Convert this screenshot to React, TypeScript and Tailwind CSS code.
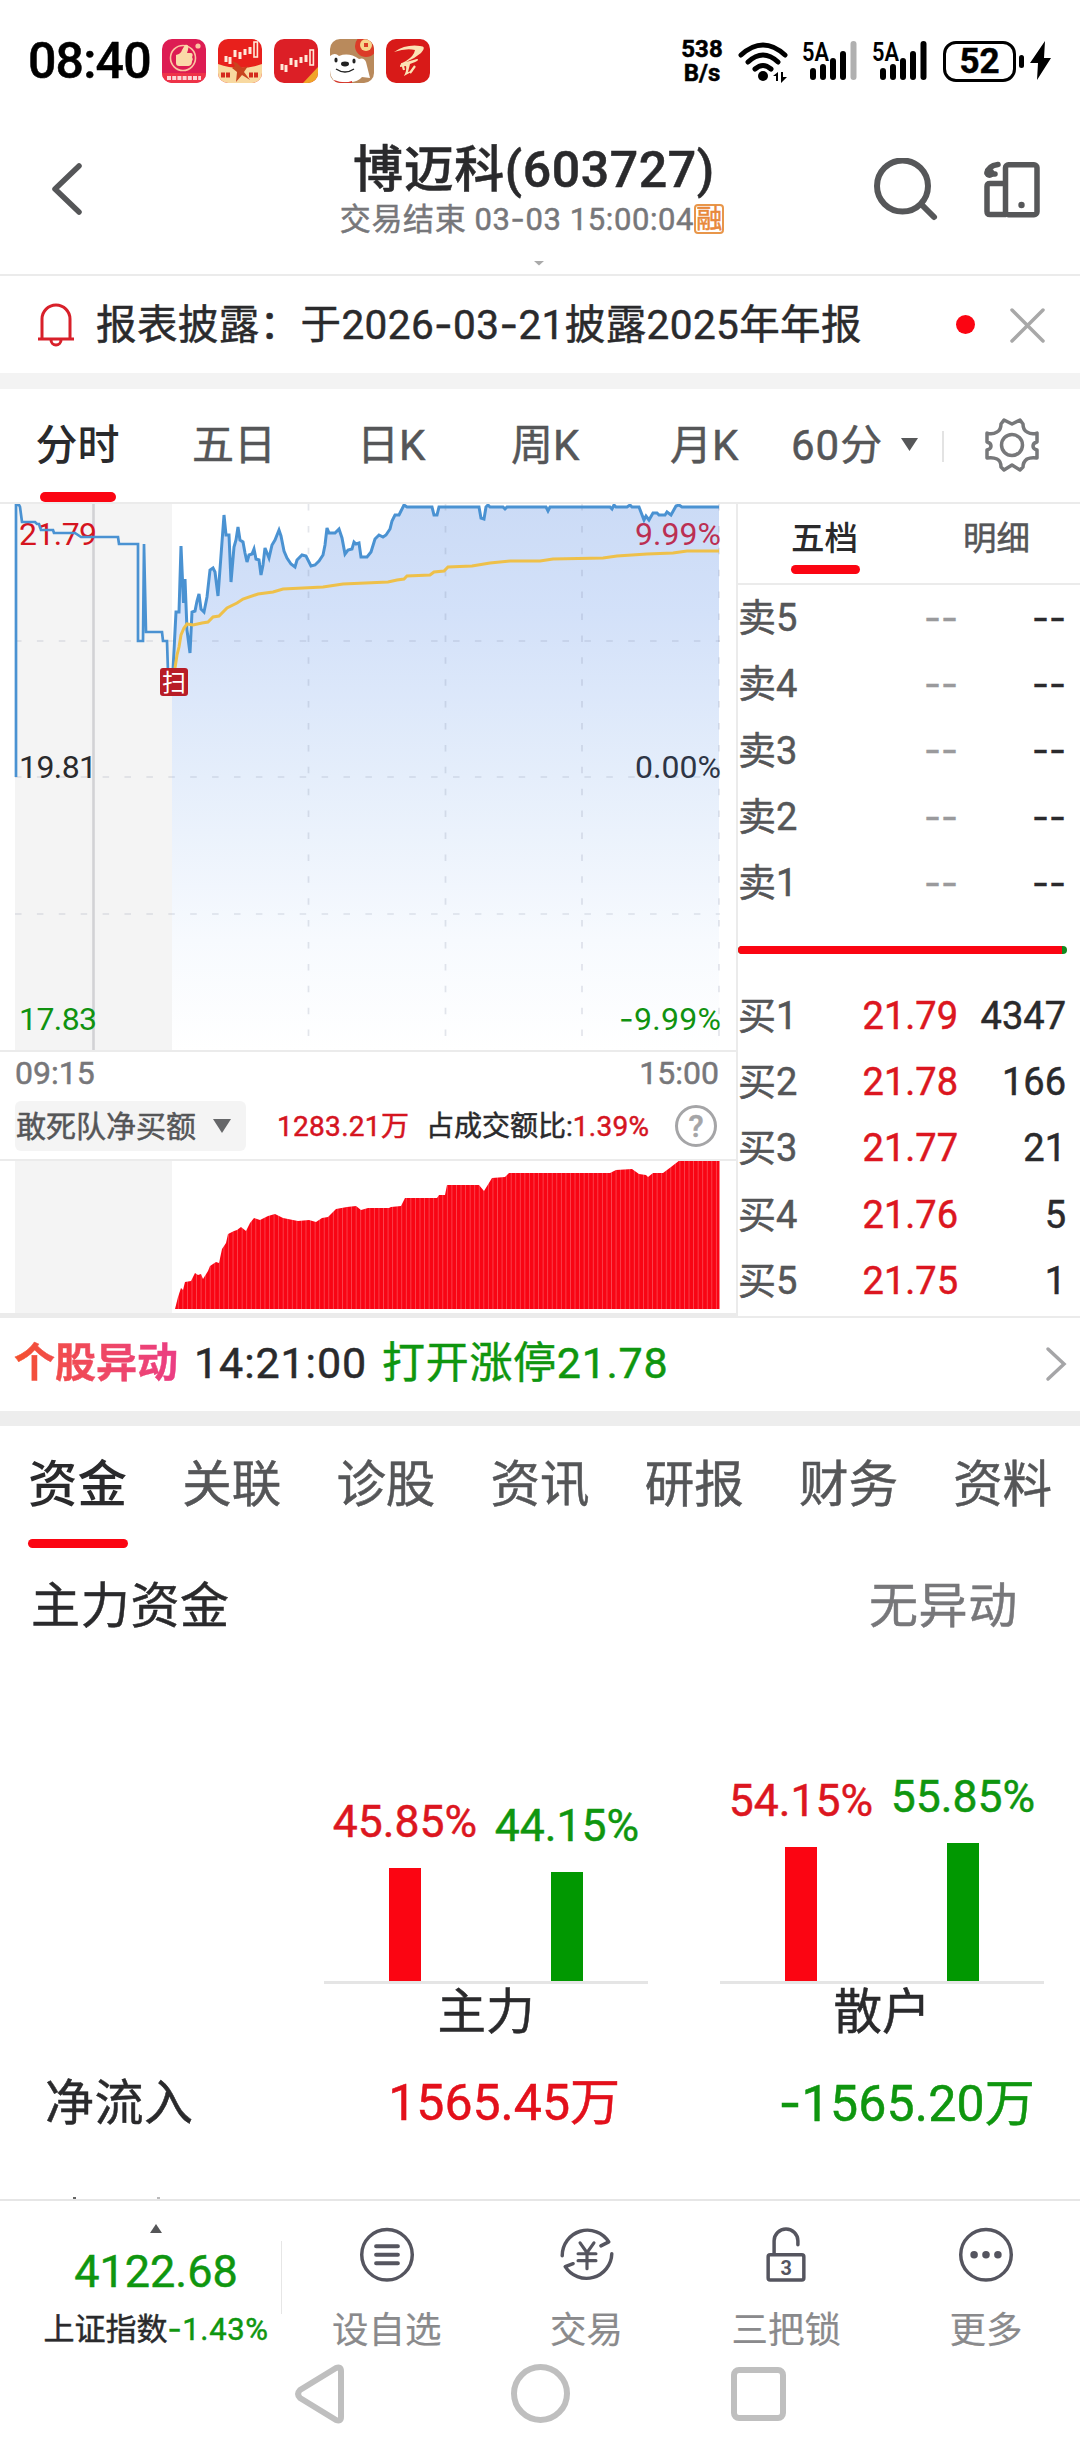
import { ReactNode } from "react";

interface Level {
  name: string;
  price: string;
  volume: string;
}

const periods = [
  { label: "五日", cls: "ml-[72px] w-[84px]" },
  { label: "日K", cls: "ml-[81px] w-[70px]" },
  { label: "周K", cls: "ml-[84px] w-[74px]" },
  { label: "月K", cls: "ml-[85px] w-[74px]" },
];

const sells: Level[] = [5, 4, 3, 2, 1].map((n) => ({ name: `卖${n}`, price: "--", volume: "--" }));

const buys: Level[] = [
  { name: "买1", price: "21.79", volume: "4347" },
  { name: "买2", price: "21.78", volume: "166" },
  { name: "买3", price: "21.77", volume: "21" },
  { name: "买4", price: "21.76", volume: "5" },
  { name: "买5", price: "21.75", volume: "1" },
];

const infoTabs = ["资金", "关联", "诊股", "资讯", "研报", "财务", "资料"];

const preMarket =
  "16,777 16,505 19,505 20,507 22,522 35,522 37,524 39,524 41,530 53,530 54,533 75,533 81,537 118,537 119,544 138,544 138,641 143,641 144,544 146,632 162,632 163,641 167,641 168,672";

const priceLine =
  "173,670 176,612 179,612 181,546 183.5,603 185,579 187,630 190,653 192,612 195,611 197,601 199,594 201,609 204,612 207,597 210,570 213,568 215,572 218,596 224,515 226,535 229,535 231,582 234,547 236,540 238,527 240,540 243,542 245,553 247,562 249,555 252,554 254,549 256,559 259,560 261,575 263,565 265,548 269,558 272,545 275,540 279,530 281,536 284,551 287,558 291,564 295,567 297,560 302,555 306,556 311,566 315,565 319,561 323,555 325,545 327,528 329,533 335,533 339,529 342,538 345,554 348,550 352,549 354,542 356,544 359,543 361,557 367,557 371,552 375,539 379,535 383,537 386,535 390,529 392,521 395,515 399,515 401,511 404,505 407,507 432,507 434,515 437,515 439,507 479,507 481,518 484,519 486,507 488,505 490,507 503,507 505,509 507,507 546,507 548,511 550,507 610,507 612,509 614,505 616,507 627,507 630,505 632,507 639,507 644,520 646,516 649,520 653,513 657,513 659,515 665,515 667,512 671,515 676,506 679,505 682,507 719,507";

const avgLine =
  "175,668 177,655 179,647 181,635 184,628 187,624 193,625 202,623 208,622 213,617 219,616 227,608 237,603 243,599 258,594 273,592 283,589 323,587 343,584 388,582 397,580 404,579 407,576 430,575 434,572 444,571 448,567 472,566 490,563 510,561 540,561 553,559 603,558 617,556 647,554 673,553 687,551 719,551";

const netBuy =
  "175,1309 178,1297 181,1288 183,1290 185,1282 191,1281 195,1273 198,1275 201,1274 203,1279 208,1271 210,1266 216,1262 219,1263 222,1249 226,1243 228,1234 234,1231 237,1230 241,1227 246,1231 250,1223 254,1218 260,1220 268,1216 275,1214 283,1218 298,1221 309,1220 316,1222 322,1218 328,1217 336,1209 347,1207 356,1206 361,1210 368,1208 389,1208 391,1207 401,1206 405,1198 437,1198 439,1195 445,1195 447,1185 479,1185 484,1191 492,1178 505,1177 509,1173 610,1173 616,1170 632,1169 639,1174 646,1175 648,1177 653,1173 663,1173 671,1167 680,1160 719.5,1160";

function Candles() {
  return (
    <g stroke="#ffe9d8" strokeWidth="1.6" fill="#ffe9d8">
      <path d="M8 25v6M12 26v7M17 19v7M22 21v7M27 18v6M32 16v7" strokeWidth="3" />
      <rect x="36" y="11" width="3.4" height="15" fill="none" />
    </g>
  );
}

function AppIcons() {
  return (
    <div className="flex gap-3">
      <svg className="h-11 w-11 rounded-[10px] bg-[#dd1c53]" viewBox="0 0 44 44">
        <rect y="34" width="44" height="10" fill="#ee3348" />
        <circle cx="21" cy="19" r="12.5" fill="none" stroke="#fbc4a0" strokeWidth="1.6" />
        <path d="M14 16q5-1 6-5l3-5c3-1 4 1 3 5l-1 3h4c2 0 2 3 1 4 1 2 1 3 0 4 0 3-1 5-5 5h-8q-3 0-3-3z" fill="#fbd9a8" />
        <circle cx="36" cy="7" r="2.6" fill="#fbc4a0" />
        <path d="M5 39h34" stroke="#fcd6d6" strokeWidth="4" strokeDasharray="4 1.2" />
      </svg>
      <svg className="h-11 w-11 rounded-[10px] bg-[#e8201c]" viewBox="0 0 44 44">
        <path d="M0 25q22 8 44 0v19H0z" fill="#f8d9a0" />
        <g transform="translate(0 -8)"><Candles /></g>
        <path d="M14 22l5 2 5 5 6-2-4 6 6 8-8-5-6 7 1-10-5-4 3-2z" fill="#c8441f" />
        <path d="M3 36h9M31 36h10" stroke="#d42a1d" strokeWidth="5" strokeDasharray="4 1" />
      </svg>
      <svg className="h-11 w-11 rounded-[10px] bg-[#dc1f26]" viewBox="0 0 44 44">
        <Candles />
        <path d="M44 28L29 44h15z" fill="#f0a428" />
      </svg>
      <svg className="h-11 w-11 rounded-[10px] bg-[#b98a5c]" viewBox="0 0 44 44">
        <circle cx="36" cy="7" r="11" fill="#dc3b28" />
        <circle cx="36" cy="6" r="6" fill="#f6d58c" />
        <path d="M34 4h4v4h-4z" fill="#dc3b28" />
        <path d="M0 17q5-4 9 0 10-4 20 3 5-2 7 3l4 16-8-1q-4 5-12 5H6q-6-4-6-12z" fill="#fff" />
        <ellipse cx="15" cy="25" rx="4" ry="2.400" fill="#222" />
        <ellipse cx="6" cy="21" rx="1.6" ry="2.6" fill="#222" />
        <ellipse cx="24" cy="22" rx="1.6" ry="2.6" fill="#222" />
        <path d="M6 30q9 6 18 0" fill="none" stroke="#222" strokeWidth="1.4" />
        <path d="M4 41q10 4 18 1v2H5z" fill="#d8342b" />
      </svg>
      <svg className="h-11 w-11 rounded-[10px] bg-[#d81a18]" viewBox="0 0 44 44">
        <path d="M8 13Q20 5 34 7q7 0 1 7-7 6-15 9l11-3q4 1-7 5l-2 8 5-1-9 5q3-6 2-10l-6 1q-1-3 6-6 8-5 9-11Q20 9 8 13z" fill="#fbe3b4" />
        <path d="M16 24l2 7M29 27l-5 7" stroke="#fbe3b4" strokeWidth="2.2" />
      </svg>
    </div>
  );
}

function Signal({ weak }: { weak?: boolean }) {
  return (
    <svg className="h-[44px] w-[56px]" viewBox="0 0 56 44">
      <text x="0" y="22" fontSize="25" fontWeight="600" fontFamily="Roboto" textLength="27" lengthAdjust="spacingAndGlyphs">5A</text>
      <g strokeWidth="6" strokeLinecap="round" stroke="#000">
        <path d="M11 32v6M21 28v10M31 22v16M41 15v23" />
        <path d="M51.500 5v33" stroke={weak ? "#b0b0b0" : "#000"} />
      </g>
    </svg>
  );
}

function StatusBar() {
  return (
    <div className="flex h-[122px] items-center pl-[28px] text-black">
      <div className="w-[134px] text-[50px] font-medium tracking-[-0.800px]">08:40</div>
      <AppIcons />
      <div className="ml-[249px] w-[46px] text-center text-[24px] leading-[24px] font-bold">
        <div>538</div>
        <div>B/s</div>
      </div>
      <svg className="ml-[13px] h-[44px] w-[52px]" viewBox="0 0 52 44" fill="none" stroke="#000" strokeWidth="5" strokeLinecap="round">
        <path d="M3 16Q25-4 47 16M10 23Q25 9 40 23M17 30q8-7 16 0" />
        <circle cx="25" cy="37" r="5" fill="#000" stroke="none" />
        <path d="M35 37l5-4v9h-2v-5zM43 33h2v5h4l-6 6z" fill="#000" stroke="none" />
      </svg>
      <div className="ml-[12px] flex gap-[14px]">
        <Signal weak />
        <Signal />
      </div>
      <div className="ml-[15px] flex h-[41px] w-[73px] items-center justify-center rounded-[13px] border-[3px] border-black text-[35px] font-bold">52</div>
      <div className="ml-[3px] h-[13px] w-[5px] rounded-full bg-black" />
      <svg className="ml-[6px] h-[40px] w-[22px]" viewBox="0 0 22 40">
        <path d="M15 0L0 22h8L7 39l14-22h-7z" />
      </svg>
    </div>
  );
}

function Header() {
  return (
    <div className="flex h-[152px]">
      <svg className="mt-[40px] ml-[48px] h-[54px] w-[36px] shrink-0" viewBox="0 0 36 54" fill="none" stroke="#555658" strokeWidth="5.500" strokeLinecap="round" strokeLinejoin="round">
        <path d="M31 4L7 27l24 23" />
      </svg>
      <div className="ml-[204px] flex w-[502px] shrink-0 flex-col items-center">
        <div className="mt-[23px] -ml-[10px] text-[50px] font-medium tracking-[0.600px] whitespace-nowrap text-[#2a2a2c]">博迈科(603727)</div>
        <div className="mt-[8px] -ml-[14px] flex items-center whitespace-nowrap text-[31px] text-[#77777a]">
          <span className="tracking-[0.600px]">交易结束 03<Dash />03 15:00:04</span>
          <span className="flex h-[30px] w-[30px] items-center justify-center rounded-[4px] border-2 border-[#e8964a] text-[26px] text-[#e8883a]">融</span>
        </div>
        <svg className="mt-[25px] h-[7px] w-[12px]" viewBox="0 0 12 7"><path d="M1 1l5 4.500 5-4.500" fill="#aaa" /></svg>
      </div>
      <svg className="mt-[36px] ml-[83px] h-[64px] w-[66px] shrink-0" viewBox="0 0 66 64" fill="none" stroke="#565759" strokeWidth="6" strokeLinecap="round">
        <circle cx="29.500" cy="28" r="25.500" />
        <path d="M49 47l12 12" />
      </svg>
      <svg className="mt-[38px] ml-[43px] h-[60px] w-[60px] shrink-0" viewBox="0 0 60 60" fill="none" stroke="#565759" strokeWidth="5.500">
        <rect x="23.500" y="4.700" width="31.500" height="50" rx="3" />
        <path d="M23.500 23.500H8q-3 0-3 3v25q0 3 3 3h16" />
        <circle cx="39.500" cy="45" r="3.200" fill="#565759" stroke="none" />
        <path d="M16 4.500Q6 6 5 13" strokeLinecap="round" />
        <circle cx="7.500" cy="13" r="5" fill="#565759" stroke="none" />
        <path d="M8 14h5" strokeLinecap="round" />
      </svg>
    </div>
  );
}

function Notice() {
  return (
    <div className="flex h-[99px] items-center border-t-2 border-[#ebebeb] text-[40.500px] whitespace-nowrap text-[#2a2a2c]">
      <svg className="ml-[37px] h-[46px] w-[38px]" viewBox="0 0 38 46" fill="none" stroke="#d8202a" strokeWidth="3">
        <path d="M5 37V17a14 14 0 0 1 28 0v20M1 37h36M14 38a5 5 0 0 0 10 0" />
      </svg>
      <div className="ml-[21px] w-[860px] pt-[2px] tracking-[0.400px]">
        报表披露：于2026<Dash />03<Dash />21披露2025年年报
      </div>
      <div className="h-[19px] w-[19px] rounded-full bg-[#fb0512]" />
      <svg className="ml-[34px] h-[36px] w-[36px]" viewBox="0 0 36 36" stroke="#a8a8a8" strokeWidth="3.500" strokeLinecap="round">
        <path d="M3 3l31 31M34 3L3 34" />
      </svg>
    </div>
  );
}

// Wider hyphen than the one in Roboto
function Dash() {
  return <span className="font-[Inter]">-</span>;
}

function PeriodTabs() {
  return (
    <div className="flex h-[115px] border-b-2 border-[#ebebeb] text-[42px] text-[#555658]">
      <div className="ml-[35px] flex w-[85px] flex-col items-center">
        <div className="mt-[36px] h-[67px] font-medium text-[#2a2a2c] [-webkit-text-stroke:0px]">分时</div>
        <div className="h-[10px] w-[76px] rounded-full bg-[#fb0512]" />
      </div>
      {periods.map((p) => (
        <div key={p.label} className={`pt-[36px] whitespace-nowrap ${p.cls}`}>{p.label}</div>
      ))}
      <div className="ml-[47px] w-[96px] pt-[36px] tracking-[1px] whitespace-nowrap">60分</div>
      <svg className="mt-[48px] ml-[13px] h-[16px] w-[19px]" viewBox="0 0 19 16"><path d="M1 1h17l-8.500 13z" fill="#565759" /></svg>
      <div className="mt-[42px] ml-[23px] h-[31px] w-[2px] bg-[#e3e3e3]" />
      <svg className="mt-[28px] ml-[40px] h-[56px] w-[56px]" viewBox="0 0 56 56" fill="none" stroke="#77787a" strokeWidth="3.500" strokeLinejoin="round">
        <path d="M17 7l3-4 8 4 8-4 3 4q0 6 4 8 5 3 10 1v9q-4 1-4 4t4 4v8q-6-1-10 1-4 3-4 8l-3 3-8-5-8 5-3-3q0-6-4-8-4-2-10-1v-8q4-1 4-4t-4-4v-9q5 2 10-1 4-2 4-8z" />
        <circle cx="28" cy="28" r="10.500" />
      </svg>
    </div>
  );
}

function PriceChart() {
  return (
    <svg className="block h-[546px] w-[737px]" viewBox="0 504 737 546" fontFamily="Roboto" fontSize="32">
      <defs>
        <linearGradient id="area" x1="0" y1="504" x2="0" y2="1050" gradientUnits="userSpaceOnUse">
          <stop offset="0" stopColor="#cbdbf6" />
          <stop offset="0.200" stopColor="#d3e1f9" />
          <stop offset="0.500" stopColor="#e5eefb" />
          <stop offset="0.800" stopColor="#f7fafe" />
          <stop offset="1" stopColor="#ffffff" />
        </linearGradient>
      </defs>
      <rect x="15" y="504" width="157" height="546" fill="#f4f4f4" />
      <polygon points={`172,1050 172,670 ${priceLine} 719,1050`} fill="url(#area)" />
      <g stroke="#6b7690" strokeOpacity="0.180" strokeWidth="1.700" strokeDasharray="6.500 15.400">
        <path d="M15 641H720M15 777H720M15 914H720" />
        <path d="M308.500 504V1045M445.500 504V1045M582 504V1045M719 504V1045" />
      </g>
      <path d="M93.500 504V1050" stroke="#d2d2d5" strokeWidth="2.600" />
      <text x="19" y="545" fill="#d5141f" textLength="78">21.79</text>
      <text x="19" y="778" fill="#2a2a2c" textLength="78">19.81</text>
      <text x="19" y="1030" fill="#109210" textLength="78">17.83</text>
      <text x="635" y="545" fill="#bb2f52" textLength="86">9.99%</text>
      <text x="635" y="778" fill="#2e3545" textLength="86">0.00%</text>
      <text x="619" y="1030" fill="#109210" textLength="102"><tspan fontFamily="Inter">-</tspan>9.99%</text>
      <polyline points={preMarket} fill="none" stroke="#4a92d2" strokeWidth="2.700" />
      <polyline points={priceLine} fill="none" stroke="#4a92d2" strokeWidth="3" />
      <polyline points={avgLine} fill="none" stroke="#eec04a" strokeWidth="3" />
      <rect x="160" y="668" width="28" height="28" rx="3" fill="#b81c26" />
      <text x="162" y="691" fontSize="24" fill="#fff" fontFamily="Noto Sans CJK SC">扫</text>
    </svg>
  );
}

function NetBuyChart() {
  return (
    <svg className="block h-[152px] w-[737px]" viewBox="0 1161 737 152">
      <defs>
        <pattern id="bars" width="4.560" height="10" patternUnits="userSpaceOnUse">
          <rect width="4.560" height="10" fill="#f90514" />
          <rect width="0.700" height="10" fill="#fb5660" />
        </pattern>
      </defs>
      <rect x="15" y="1161" width="157" height="152" fill="#f4f4f4" />
      <polygon points={`${netBuy} 719.5,1309`} fill="url(#bars)" />
    </svg>
  );
}

function OrderRow({ level, bid }: { level: Level; bid?: boolean }) {
  return (
    <div className="flex h-[66.300px] items-center text-[38px]">
      <div className="w-[100px] text-[#555658]">{level.name}</div>
      <div className={`w-[120px] text-right ${bid ? "text-[#dc1620]" : "pb-[2px] font-[Inter] text-[37px] text-[#9a9a9c]"}`}>{level.price}</div>
      <div className={`w-[108px] text-right text-[#2a2a2c] ${bid ? "" : "pb-[2px] font-[Inter] text-[37px]"}`}>{level.volume}</div>
    </div>
  );
}

function OrderBook() {
  return (
    <div className="-ml-px flex w-[344px] flex-col border-l-2 border-[#ebebeb]">
      <div className="flex h-[81px] border-b-2 border-[#ebebeb] pl-[53px] text-[33.500px]">
        <div className="w-[70px]">
          <div className="h-[61px] pt-[18px] font-medium text-[#2a2a2c] [-webkit-text-stroke:0px]">五档</div>
          <div className="h-[9px] w-[69px] rounded-full bg-[#fb0512]" />
        </div>
        <div className="ml-[102px] pt-[18px] text-[#555658]">明细</div>
      </div>
      <div>
        {sells.map((l) => <OrderRow key={l.name} level={l} />)}
      </div>
      <div className="mt-[30px] flex h-[8px] w-[329px] overflow-hidden rounded-full bg-[#118a1e]">
        <div className="w-[324px] bg-[#fb0512]" />
      </div>
      <div className="mt-[28px]">
        {buys.map((l) => <OrderRow key={l.name} level={l} bid />)}
      </div>
    </div>
  );
}

function MarketPanel() {
  return (
    <div className="flex h-[814px] border-b-2 border-[#ebebeb]">
      <div className="w-[737px]">
        <PriceChart />
        <div className="flex h-[51px] justify-between border-t-2 border-[#ebebeb] pt-[5px] pr-[18px] pl-[15px] text-[32px] text-[#77777a]">
          <span>09:15</span>
          <span>15:00</span>
        </div>
        <div className="flex h-[60px] items-start border-b-2 border-[#ebebeb] pl-[15px] whitespace-nowrap">
          <div className="flex h-[50px] w-[231px] items-center rounded-[6px] bg-[#f4f4f4] pl-px text-[30px] text-[#555658]">
            <span className="pt-[2px]">敢死队净买额</span>
            <svg className="ml-[17px] h-[14px] w-[18px]" viewBox="0 0 18 14"><path d="M0 0h18L9 14z" fill="#666769" /></svg>
          </div>
          <div className="flex h-[50px] w-[410px] items-center pt-[2px] pl-[31px] text-[28px] text-[#d5141f]">
            <span className="w-[149px] shrink-0 tracking-[0.300px]">1283.21万</span>
            <span className="text-[#2a2a2c]">占成交额比:</span>
            <span className="tracking-[0.300px]">1.39%</span>
          </div>
          <div className="mt-[4px] ml-[19px] flex h-[42px] w-[42px] items-center justify-center rounded-full border-[3px] border-[#a5a5a7] text-[31px] font-medium text-[#a5a5a7]">?</div>
        </div>
        <NetBuyChart />
        <div className="h-[3px] bg-[#ebebeb]" />
      </div>
      <OrderBook />
    </div>
  );
}

function Movement() {
  return (
    <div className="flex h-[93px] items-center pb-[2px] pl-[14px] text-[43px] whitespace-nowrap">
      <span className="w-[180px] bg-gradient-to-r from-[#f4502c] to-[#ea3a8a] bg-clip-text py-1 text-[41px] font-bold text-transparent">个股异动</span>
      <span className="w-[188px] tracking-[0.900px] text-[#2a2a2c]">14:21:00</span>
      <span className="tracking-[0.700px] text-[#0f960f]">打开涨停21.78</span>
      <svg className="mr-[12px] ml-auto h-[38px] w-[24px]" viewBox="0 0 24 38" fill="none" stroke="#a5a5a7" strokeWidth="3.500" strokeLinecap="round"><path d="M4 4l16 15L4 34" /></svg>
    </div>
  );
}

function InfoTabs() {
  return (
    <div className="flex h-[130px] gap-[54.200px] pt-[35px] pl-[28px] text-[49.500px] whitespace-nowrap text-[#555658]">
      {infoTabs.map((t, i) => (
        <div key={t} className={`w-[100px] shrink-0 ${i === 0 ? "font-medium text-[#2a2a2c] [-webkit-text-stroke:0px]" : ""}`}>
          <div>{t}</div>
          {i === 0 && <div className="mt-[28px] h-[9px] rounded-full bg-[#fb0512]" />}
        </div>
      ))}
    </div>
  );
}

interface Bar {
  pct: string;
  height: number;
}

function BarGroup({ name, buy, sell }: { name: string; buy: Bar; sell: Bar }) {
  return (
    <div className="w-[324px] text-[44.500px]">
      <div className="flex h-[230px] items-end border-b-[3px] border-[#e5e5e5]">
        <div className="flex w-[162px] flex-col items-center text-[#dc1620]">
          <div className="mb-[24px]">{buy.pct}</div>
          <div className="w-[32px] bg-[#fb0512]" style={{ height: buy.height }} />
        </div>
        <div className="flex w-[162px] flex-col items-center text-[#0f960f]">
          <div className="mb-[24px]">{sell.pct}</div>
          <div className="w-[32px] bg-[#019801]" style={{ height: sell.height }} />
        </div>
      </div>
      <div className="mt-[5px] text-center text-[48.500px] text-[#2a2a2c]">{name}</div>
    </div>
  );
}

function Funds() {
  return (
    <div className="h-[643px] overflow-hidden text-[49px] whitespace-nowrap text-[#2a2a2c]">
      <div className="flex justify-between pt-[26px] pr-[62px] pl-[31px]">
        <span className="tracking-[0.700px]">主力资金</span>
        <span className="tracking-[0.700px] text-[#77777a]">无异动</span>
      </div>
      <div className="mt-[123px] flex gap-[72px] pl-[324px]">
        <BarGroup name="主力" buy={{ pct: "45.85%", height: 113 }} sell={{ pct: "44.15%", height: 109 }} />
        <BarGroup name="散户" buy={{ pct: "54.15%", height: 134 }} sell={{ pct: "55.85%", height: 138 }} />
      </div>
      <div className="mt-[40px] flex items-center pl-[45px]">
        <div className="w-[280px] tracking-[0.500px]">净流入</div>
        <div className="w-[295px] text-right text-[50px] text-[#e3101b]">1565.45万</div>
        <div className="w-[415px] text-right text-[50px] tracking-[0.200px] text-[#0f960f]"><Dash />1565.20万</div>
      </div>
      <div className="mt-[68px] flex gap-[81px] pl-[73px]">
        <i className="h-[2px] w-[3px] bg-[#666]" />
        <i className="h-[2px] w-[3px] bg-[#bbb]" />
      </div>
    </div>
  );
}

function NavItem({ label, children }: { label: string; children: ReactNode }) {
  return (
    <div className="flex w-[199.700px] shrink-0 flex-col items-center pt-[25px] text-[36.500px] text-[#8a8a8c] [-webkit-text-stroke:0.2px]">
      <svg className="h-[58px] w-[58px]" viewBox="0 0 58 58" fill="none" stroke="#55555f" strokeWidth="3.500" strokeLinecap="round">{children}</svg>
      <div className="mt-[29px]">{label}</div>
    </div>
  );
}

function BottomBar() {
  return (
    <div className="flex h-[150px] border-t-2 border-[#e6e6e6] whitespace-nowrap">
      <div className="flex w-[281px] shrink-0 flex-col items-center pl-[31px]">
        <svg className="mt-[22px] h-[11px] w-[12px]" viewBox="0 0 12 11"><path d="M6 1l6 9H0z" fill="#555658" /></svg>
        <div className="mt-[15px] text-[45px] text-[#0f960f]">4122.68</div>
        <div className="mt-[19px] text-[31px] text-[#2a2a2c]">
          上证指数<span className="tracking-[0.600px] text-[#0f960f]"><Dash />1.43%</span>
        </div>
      </div>
      <div className="mt-[40px] h-[73px] w-px shrink-0 bg-[#e6e6e6]" />
      <div className="ml-[5px] flex shrink-0">
        <NavItem label="设自选">
          <circle cx="29" cy="29" r="25.500" />
          <path d="M18 20.500h22M18 29h22M18 37.500h22" strokeWidth="4" />
        </NavItem>
        <NavItem label="交易">
          <path d="M4 30A25.500 25.500 0 0 1 51 16l-8 4M54 28A25.500 25.500 0 0 1 7 41l8-3" strokeLinejoin="round" />
          <path d="M22 17l7 10 7-10M29 27v16M20 28h18M20 35h18" strokeWidth="3.200" />
        </NavItem>
        <NavItem label="三把锁">
          <rect x="11" y="29" width="36" height="25.500" rx="2" />
          <path d="M17 28V15a12 12 0 0 1 24 0v4" />
          <text x="23.500" y="49" fontSize="20" fontWeight="700" fontFamily="Roboto" fill="#55555f" stroke="none">3</text>
        </NavItem>
        <NavItem label="更多">
          <circle cx="29" cy="29" r="25.500" />
          <g fill="#55555f" stroke="none">
            <circle cx="17" cy="29" r="3.800" />
            <circle cx="29" cy="29" r="3.800" />
            <circle cx="41" cy="29" r="3.800" />
          </g>
        </NavItem>
      </div>
    </div>
  );
}

function SystemNav() {
  return (
    <div className="flex h-[91px] items-center pb-[2px] pl-[294px]">
      <svg className="h-[62px] w-[54px]" viewBox="0 0 54 62" fill="none" stroke="#bfbfbf" strokeWidth="6" strokeLinejoin="round">
        <path d="M6 27L42 5q5-2 5 3v46q0 5-5 3L6 35q-4-4 0-8z" />
      </svg>
      <div className="ml-[163px] h-[59px] w-[59px] rounded-full border-[6px] border-[#bfbfbf]" />
      <div className="ml-[161px] h-[54px] w-[55px] rounded-[8px] border-[6px] border-[#bfbfbf]" />
    </div>
  );
}

export default function App() {
  return (
    <div className="h-[2440px] w-[1080px] overflow-hidden bg-white font-[Roboto,'Noto_Sans_CJK_SC',sans-serif] leading-none [-webkit-text-stroke:0.5px]">
      <StatusBar />
      <Header />
      <Notice />
      <div className="h-4 bg-[#f3f3f3]" />
      <PeriodTabs />
      <MarketPanel />
      <Movement />
      <div className="h-[15px] bg-[#ededed]" />
      <InfoTabs />
      <Funds />
      <BottomBar />
      <SystemNav />
    </div>
  );
}
